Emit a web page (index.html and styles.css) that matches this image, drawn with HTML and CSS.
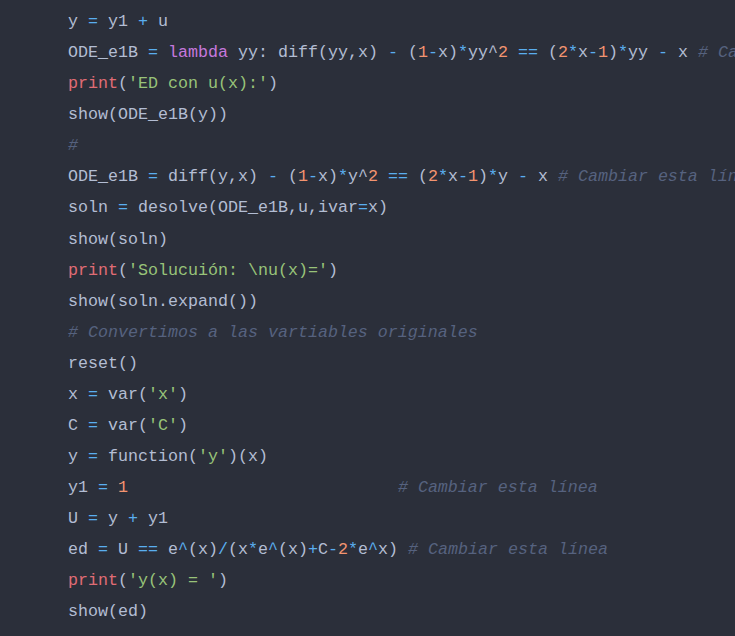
FILE: index.html
```html
<!DOCTYPE html>
<html lang="es">
<head>
<meta charset="utf-8">
<title>Código</title>
<link rel="stylesheet" href="styles.css">
</head>
<body>
<pre class="code"><code><span class="ln">y <span class="op">=</span> y1 <span class="op">+</span> u</span>
<span class="ln">ODE_e1B <span class="op">=</span> <span class="kw">lambda</span> yy: diff(yy,x) <span class="op">-</span> (<span class="num">1</span><span class="op">-</span>x)<span class="op">*</span>yy^<span class="num">2</span> <span class="op">==</span> (<span class="num">2</span><span class="op">*</span>x<span class="op">-</span><span class="num">1</span>)<span class="op">*</span>yy <span class="op">-</span> x <span class="cm"># Cambiar esta línea</span></span>
<span class="ln"><span class="fn">print</span>(<span class="str">'ED con u(x):'</span>)</span>
<span class="ln">show(ODE_e1B(y))</span>
<span class="ln"><span class="cm">#</span></span>
<span class="ln">ODE_e1B <span class="op">=</span> diff(y,x) <span class="op">-</span> (<span class="num">1</span><span class="op">-</span>x)<span class="op">*</span>y^<span class="num">2</span> <span class="op">==</span> (<span class="num">2</span><span class="op">*</span>x<span class="op">-</span><span class="num">1</span>)<span class="op">*</span>y <span class="op">-</span> x <span class="cm"># Cambiar esta línea</span></span>
<span class="ln">soln <span class="op">=</span> desolve(ODE_e1B,u,ivar<span class="op">=</span>x)</span>
<span class="ln">show(soln)</span>
<span class="ln"><span class="fn">print</span>(<span class="str">'Solucuión: \nu(x)='</span>)</span>
<span class="ln">show(soln.expand())</span>
<span class="ln"><span class="cm"># Convertimos a las vartiables originales</span></span>
<span class="ln">reset()</span>
<span class="ln">x <span class="op">=</span> var(<span class="str">'x'</span>)</span>
<span class="ln">C <span class="op">=</span> var(<span class="str">'C'</span>)</span>
<span class="ln">y <span class="op">=</span> function(<span class="str">'y'</span>)(x)</span>
<span class="ln">y1 <span class="op">=</span> <span class="num">1</span>                           <span class="cm"># Cambiar esta línea</span></span>
<span class="ln">U <span class="op">=</span> y <span class="op">+</span> y1</span>
<span class="ln">ed <span class="op">=</span> U <span class="op">==</span> e<span class="op">^</span>(x)<span class="op">/</span>(x<span class="op">*</span>e<span class="op">^</span>(x)<span class="op">+</span>C<span class="op">-</span><span class="num">2</span><span class="op">*</span>e<span class="op">^</span>x) <span class="cm"># Cambiar esta línea</span></span>
<span class="ln"><span class="fn">print</span>(<span class="str">'y(x) = '</span>)</span>
<span class="ln">show(ed)</span></code></pre>
</body>
</html>
```

FILE: styles.css
```css
html, body {
  margin: 0;
  padding: 0;
  background: #2b2f3a;
  height: 100%;
  overflow: hidden;
}

.code {
  margin: 0;
  padding: 6px 0 0 68px;
  font-family: "Liberation Mono", "DejaVu Sans Mono", monospace;
  font-size: 16.67px;
  line-height: 31.08px;
  color: #b3bdd3;
  white-space: pre;
  overflow: hidden;
}

.code code {
  font: inherit;
}

.op { color: #5aaeef; }
.kw { color: #c678dd; }
.fn { color: #e06c75; }
.str { color: #98c379; }
.num { color: #f39470; }
.cm {
  color: #56627f;
  font-style: italic;
}
```
